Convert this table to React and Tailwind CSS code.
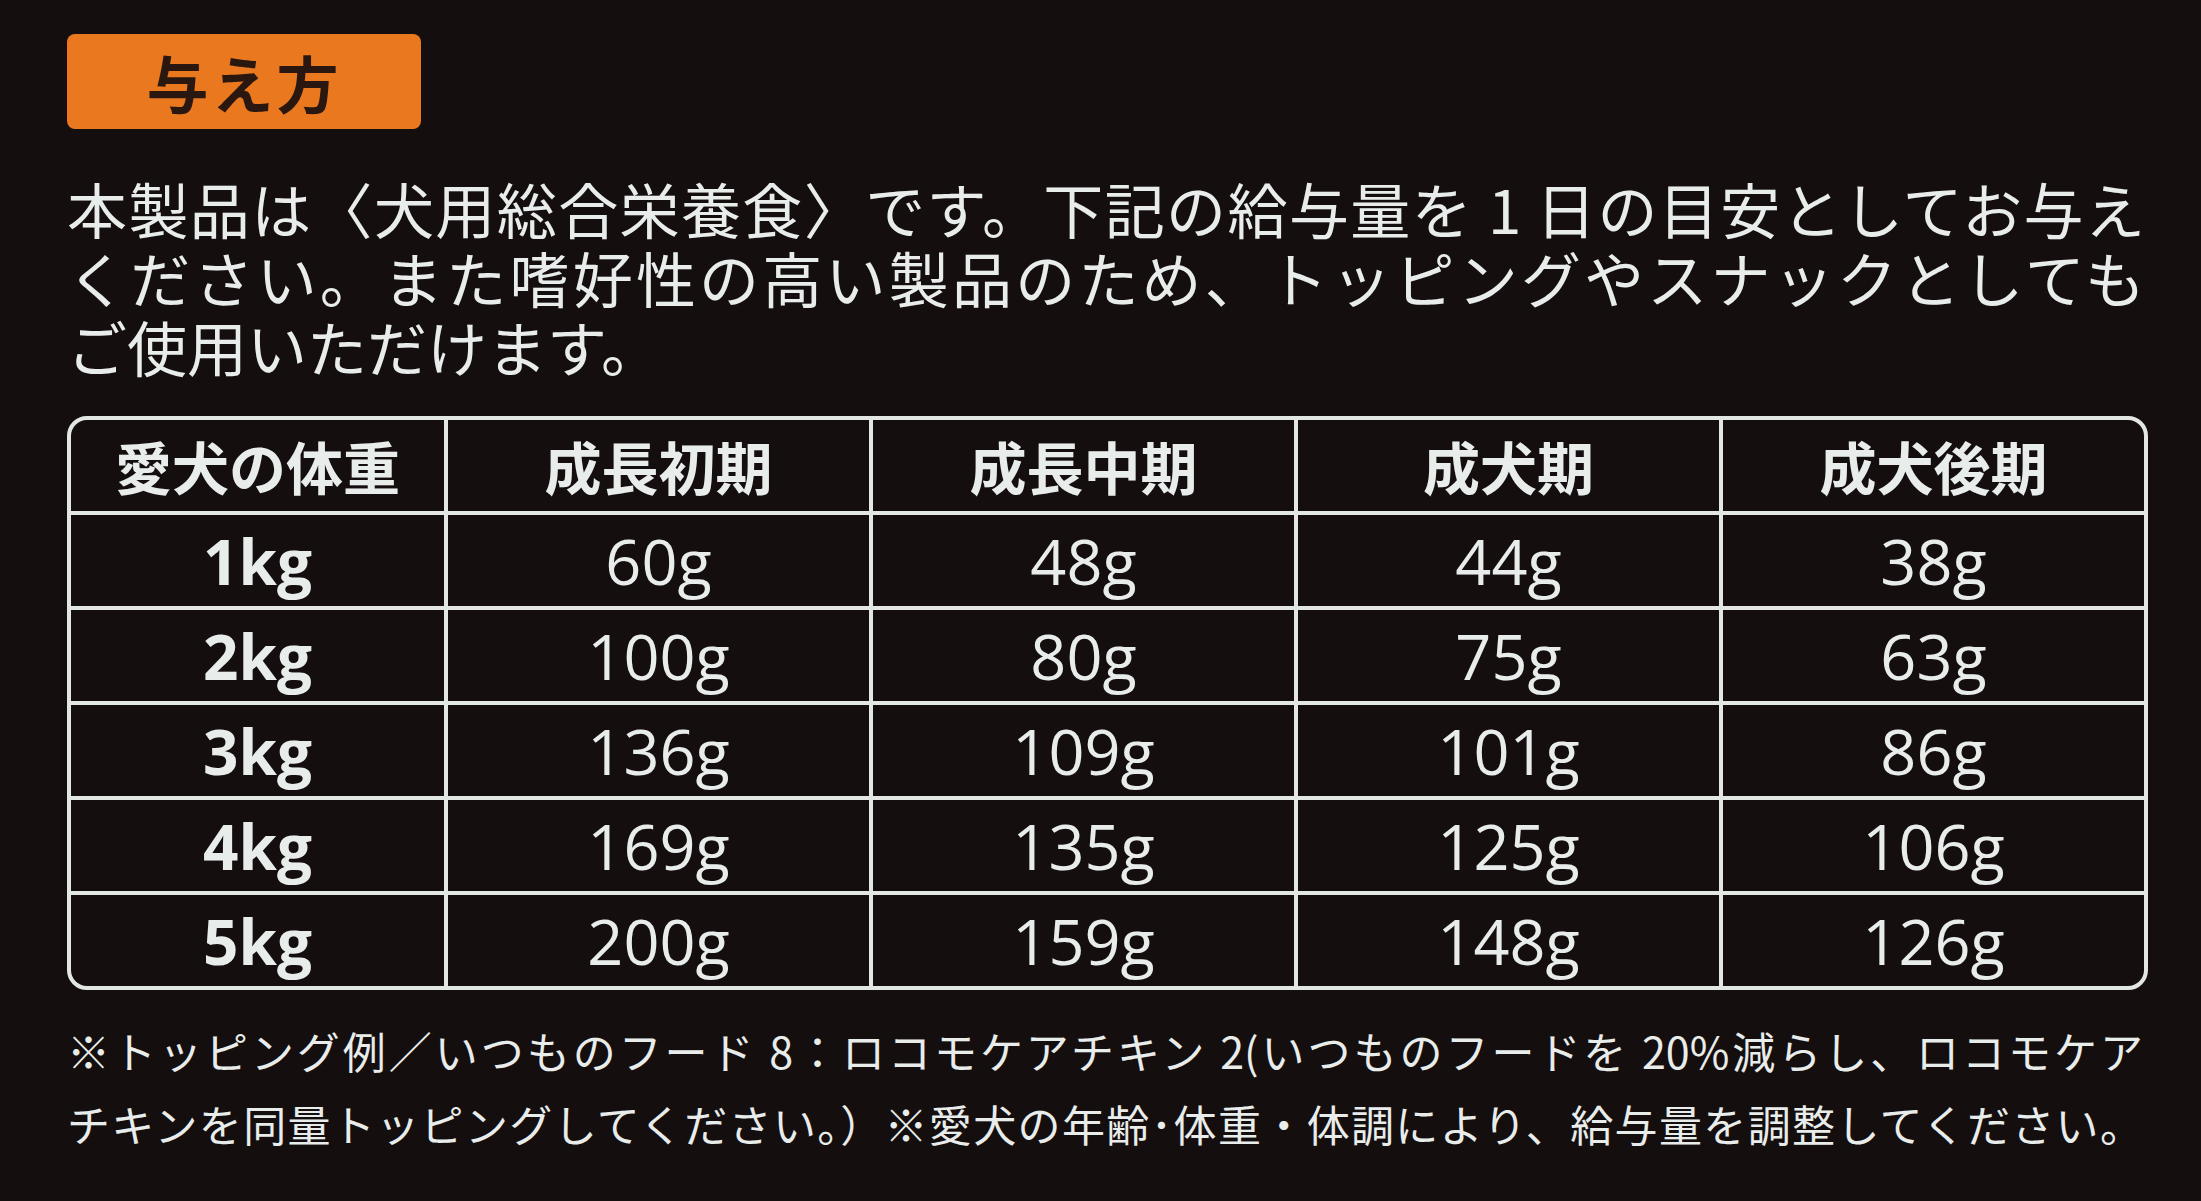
const headers = ["愛犬の体重", "成長初期", "成長中期", "成犬期", "成犬後期"];

const rows = [
  { weight: "1kg", values: ["60g", "48g", "44g", "38g"] },
  { weight: "2kg", values: ["100g", "80g", "75g", "63g"] },
  { weight: "3kg", values: ["136g", "109g", "101g", "86g"] },
  { weight: "4kg", values: ["169g", "135g", "125g", "106g"] },
  { weight: "5kg", values: ["200g", "159g", "148g", "126g"] },
];

const jp = "font-['Noto_Sans_CJK_JP',sans-serif]";
const num = "font-['Open_Sans','Noto_Sans_CJK_JP',sans-serif]";

function FeedingTable() {
  return (
    <div className="mt-[36px] w-[2081px] rounded-[20px] border-4 border-[#e3e7e4] bg-[#e3e7e4] overflow-hidden">
      <div className="grid grid-cols-[373px_repeat(4,1fr)] auto-rows-[91px] gap-[4px]">
        {headers.map((h) => (
          <div
            key={h}
            className={`${jp} bg-[#140e0f] flex items-center justify-center text-[57px] font-bold leading-none text-[#e8ecea]`}
          >
            {h}
          </div>
        ))}
        {rows.map((row) => [
          <div
            key={row.weight}
            className={`${num} bg-[#140e0f] flex items-center justify-center text-[62px] font-bold leading-none text-[#e8ecea]`}
          >
            {row.weight}
          </div>,
          ...row.values.map((v, i) => (
            <div
              key={row.weight + i}
              className={`${num} bg-[#140e0f] flex items-center justify-center text-[63px] leading-none text-[#e8ecea]`}
            >
              {v}
            </div>
          )),
        ])}
      </div>
    </div>
  );
}

export default function App() {
  return (
    <div className={`${jp} w-[2201px] h-[1201px] bg-[#140e0f] overflow-hidden pl-[67px] pt-[34px] text-[#e8ecea]`}>
      <div className="w-[354px] h-[95px] rounded-[8px] bg-[#e9781f] flex items-center justify-center">
        <span className="text-[62px] font-bold leading-none tracking-[3px] text-[#2a1710]">
          与え方
        </span>
      </div>

      <div className="mt-[44px] w-[2078px] text-[60px] leading-[69px]">
        <p className="whitespace-nowrap text-justify [text-align-last:justify]">
          本製品は〈犬用総合栄養食〉です。下記の給与量を 1 日の目安としてお与え
        </p>
        <p className="whitespace-nowrap text-justify [text-align-last:justify]">
          ください。また嗜好性の高い製品のため、トッピングやスナックとしても
        </p>
        <p className="whitespace-nowrap">ご使用いただけます。</p>
      </div>

      <FeedingTable />

      <div className="mt-[24px] w-[2076px] text-[43px] leading-[73px]">
        <p className="whitespace-nowrap text-justify [text-align-last:justify]">
          ※トッピング例／いつものフード 8：ロコモケアチキン 2(いつものフードを 20%減らし、ロコモケア
        </p>
        <p className="whitespace-nowrap text-justify [text-align-last:justify]">
          チキンを同量トッピングしてください。）※愛犬の年齢･体重・体調により、給与量を調整してください。
        </p>
      </div>
    </div>
  );
}
